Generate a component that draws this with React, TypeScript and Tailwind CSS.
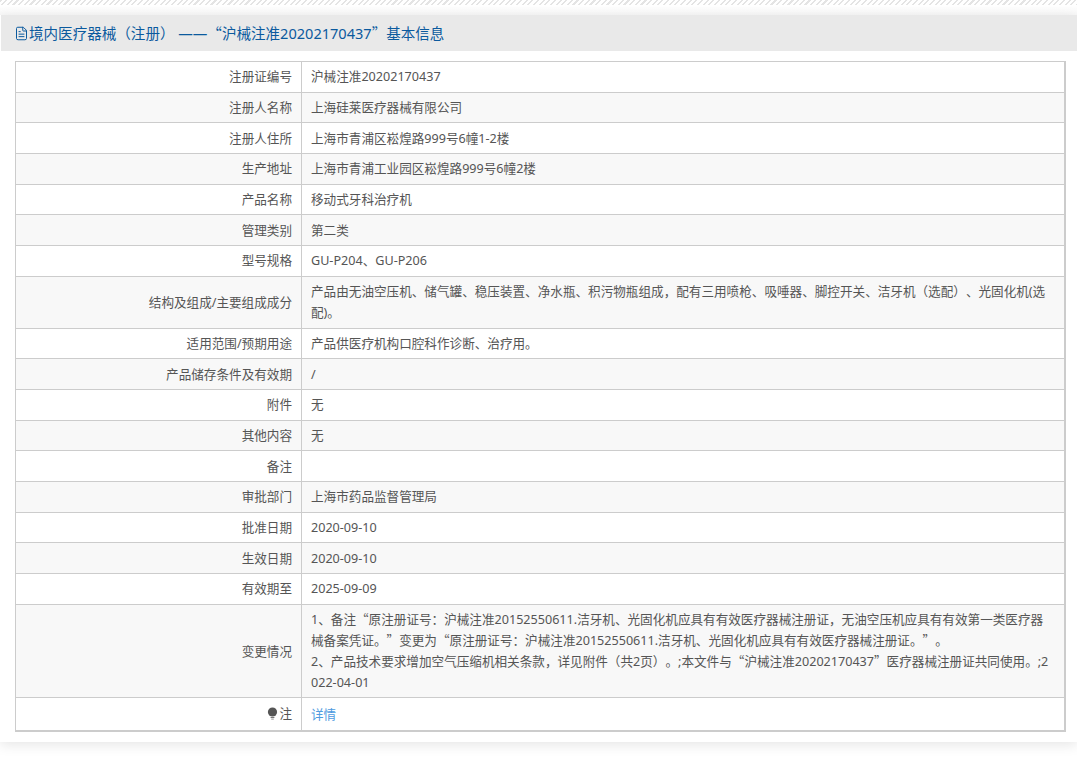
import React from 'react';
import { FileText } from 'lucide-react';

// quotes have to be the full width CJK ones, the latin font draws them narrow
const Q: React.FC<{ children: React.ReactNode }> = ({ children }) => (
  <span className="font-['Noto_Sans_CJK_SC',sans-serif] leading-[0]">{children}</span>
);

const rows: { label: string; value: React.ReactNode }[] = [
  { label: '注册证编号', value: '沪械注准20202170437' },
  { label: '注册人名称', value: '上海硅莱医疗器械有限公司' },
  { label: '注册人住所', value: '上海市青浦区崧煌路999号6幢1-2楼' },
  { label: '生产地址', value: '上海市青浦工业园区崧煌路999号6幢2楼' },
  { label: '产品名称', value: '移动式牙科治疗机' },
  { label: '管理类别', value: '第二类' },
  { label: '型号规格', value: 'GU-P204、GU-P206' },
  {
    label: '结构及组成/主要组成成分',
    value: '产品由无油空压机、储气罐、稳压装置、净水瓶、积污物瓶组成，配有三用喷枪、吸唾器、脚控开关、洁牙机（选配）、光固化机(选配)。',
  },
  { label: '适用范围/预期用途', value: '产品供医疗机构口腔科作诊断、治疗用。' },
  { label: '产品储存条件及有效期', value: '/' },
  { label: '附件', value: '无' },
  { label: '其他内容', value: '无' },
  { label: '备注', value: '' },
  { label: '审批部门', value: '上海市药品监督管理局' },
  { label: '批准日期', value: '2020-09-10' },
  { label: '生效日期', value: '2020-09-10' },
  { label: '有效期至', value: '2025-09-09' },
  {
    label: '变更情况',
    value: (
      <>
        1、备注<Q>“</Q>原注册证号：沪械注准20152550611.洁牙机、光固化机应具有有效医疗器械注册证，无油空压机应具有有效第一类医疗器械备案凭证。<Q>”</Q>变更为<Q>“</Q>原注册证号：沪械注准20152550611.洁牙机、光固化机应具有有效医疗器械注册证。<Q>”</Q>。
        <br />
        2、产品技术要求增加空气压缩机相关条款，详见附件（共2页）。;本文件与<Q>“</Q>沪械注准20202170437<Q>”</Q>医疗器械注册证共同使用。;2022-04-01
      </>
    ),
  },
];

const App: React.FC = () => {
  return (
    <div className="h-[764px] overflow-hidden bg-white font-['Noto_Sans','Noto_Sans_CJK_SC',sans-serif] text-[12.6px] leading-[21px] text-[#555] [text-spacing-trim:space-all]">
      <div className="h-[5px] bg-[repeating-linear-gradient(135deg,#e4e4e4_0px,#e4e4e4_1.5px,#fff_1.5px,#fff_4px)]" />
      <div className="h-[10px] bg-gradient-to-b from-[#fff] to-[#f8f8f8]" />
      <div className="h-[727px] bg-white pl-[1px] shadow-[0_3px_12px_rgba(0,0,0,0.1)]">
        <div className="flex h-[36px] items-center bg-[#e9e9e9] pl-[13px] text-[14.55px] text-[#0b5a9e]">
          <FileText size={15} strokeWidth={1.6} className="shrink-0" />
          <span>境内医疗器械（注册）&nbsp;——<Q>“</Q>沪械注准20202170437<Q>”</Q>基本信息</span>
        </div>
        <div className="pl-[14px] pr-[11px] pt-[10px]">
          <table className="w-[1051px] table-fixed border-collapse border-r-2 border-b-2 border-[#ccc] break-all">
            <colgroup>
              <col className="w-[286px]" />
              <col />
            </colgroup>
            <tbody>
              {rows.map((row, i) => (
                <tr key={row.label} className={i % 2 === 1 ? 'bg-[#f8f8f8]' : 'bg-white'}>
                  <td className="border border-[#ccc] px-[9px] py-[4.35px] text-right">{row.label}</td>
                  <td className="h-[30.7px] border border-[#ccc] px-[9px] py-[4.35px]">{row.value}</td>
                </tr>
              ))}
              <tr className="bg-white">
                <td className="h-[33px] border border-[#ccc] px-[9px] text-right">
                  <span className="inline-flex items-center justify-end">
                    <svg width="11" height="13" viewBox="0 0 11 13" className="mr-[1px]">
                      <circle cx="5.5" cy="5" r="4.6" fill="#555" />
                      <rect x="3.6" y="10" width="3.8" height="1" fill="#777" />
                      <rect x="4.2" y="11.6" width="2.6" height="1" fill="#999" />
                    </svg>
                    注
                  </span>
                </td>
                <td className="border border-[#ccc] px-[9px] text-[#4f9be0]">详情</td>
              </tr>
            </tbody>
          </table>
        </div>
      </div>
    </div>
  );
};

export default App;
